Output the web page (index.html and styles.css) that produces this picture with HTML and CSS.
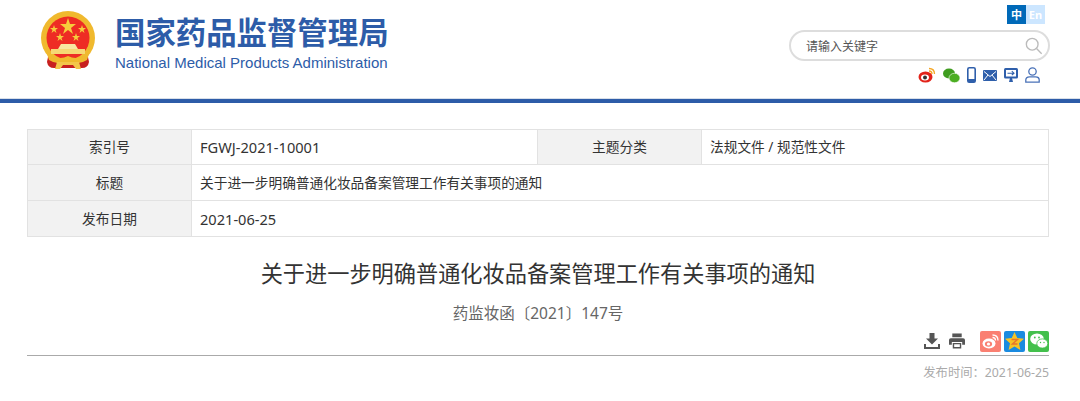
FILE: index.html
```html
<!DOCTYPE html>
<html lang="zh-CN">
<head>
    <meta charset="UTF-8">
    <meta name="viewport" content="width=device-width, initial-scale=1.0">
    <title>关于进一步明确普通化妆品备案管理工作有关事项的通知</title>
    <link rel="stylesheet" href="styles.css">
</head>
<body>
    <header class="cabecera">
        <div class="marca">
            <svg class="emblema" width="56" height="60" viewBox="0 0 56 60">
                <path d="M9 42 L7 52 Q8 58 14 58 L42 58 Q48 58 49 52 L47 42 Z" fill="#c8201f"/>
                <circle cx="28" cy="28" r="27" fill="#f0b92e"/>
                <circle cx="28" cy="28" r="21.500" fill="#ee2c24"/>
                <polygon points="28,8 30,14 36,14 31,18 33,24 28,20 23,24 25,18 20,14 26,14" fill="#f6cd3c"/>
                <polygon points="14,15 15,18 18,18 15.500,20 16.500,23 14,21 11.500,23 12.500,20 10,18 13,18" fill="#f6cd3c"/>
                <polygon points="42,15 43,18 46,18 43.500,20 44.500,23 42,21 39.500,23 40.500,20 38,18 41,18" fill="#f6cd3c"/>
                <polygon points="20,23 21,26 24,26 21.500,28 22.500,31 20,29 17.500,31 18.500,28 16,26 19,26" fill="#f6cd3c"/>
                <polygon points="36,23 37,26 40,26 37.500,28 38.500,31 36,29 33.500,31 34.500,28 32,26 35,26" fill="#f6cd3c"/>
                <path d="M18 39 L21 34 L35 34 L38 39 Z" fill="#f8e7a0"/>
                <rect x="11" y="39" width="34" height="5" fill="#f6d874"/>
                <path d="M6 41 Q17 52 28 46 Q39 52 50 41 L47 50 Q38 56 28 51 Q18 56 9 50 Z" fill="#f0b92e"/>
                <path d="M17 52 L39 52 L41 59 L36 59 L33 55 L23 55 L20 59 L15 59 Z" fill="#f3c64a"/>
            </svg>
            <div class="marca-texto">
                <div class="marca-nombre">国家药品监督管理局</div>
                <div class="marca-ingles">National Medical Products Administration</div>
            </div>
        </div>
        <div class="herramientas">
            <div class="idiomas">
                <span class="idioma activo">中</span>
                <span class="idioma">En</span>
            </div>
            <div class="buscador">
                <span>请输入关键字</span>
                <svg width="18" height="18" viewBox="0 0 20 20" fill="none" stroke="#bbb" stroke-width="1.500">
                    <circle cx="8" cy="8" r="6.500"/>
                    <path d="M12.800 12.800 L18.500 18.500"/>
                </svg>
            </div>
            <div class="enlaces">
                <svg width="18" height="16" viewBox="0 0 18 16">
                    <ellipse cx="7.500" cy="10" rx="7" ry="5.500" fill="#e2231a"/>
                    <ellipse cx="7" cy="10.500" rx="4" ry="3" fill="#fff"/>
                    <circle cx="7" cy="10.500" r="2" fill="#333"/>
                    <path d="M11 1.500 Q16.500 1.500 16.500 7 M11 4 Q14 4 14 7" fill="none" stroke="#f5a623" stroke-width="1.300"/>
                </svg>
                <svg width="17" height="15" viewBox="0 0 17 15">
                    <ellipse cx="6" cy="5.500" rx="6" ry="5" fill="#3f9d1f"/>
                    <ellipse cx="11.500" cy="10" rx="5.500" ry="4.700" fill="#4cae22" stroke="#fff" stroke-width=".6"/>
                </svg>
                <svg width="9" height="16" viewBox="0 0 9 16">
                    <rect x=".8" y=".8" width="7.400" height="14.400" rx="1.500" fill="#fff" stroke="#2f5fab" stroke-width="1.600"/>
                    <rect x=".8" y="12" width="7.400" height="3.200" fill="#2f5fab"/>
                </svg>
                <svg width="14" height="11" viewBox="0 0 14 11">
                    <rect width="14" height="11" rx="1" fill="#2f5fab"/>
                    <path d="M1 1.500 L7 6.500 L13 1.500 M1 10 L5 5 M13 10 L9 5" fill="none" stroke="#fff"/>
                </svg>
                <svg width="14" height="14" viewBox="0 0 14 14">
                    <rect width="14" height="10.500" rx="1.500" fill="#2f5fab"/>
                    <rect x="2" y="2" width="10" height="6.500" fill="#fff"/>
                    <path d="M3.500 5.200 H10 M7.800 3.200 L10 5.200 L7.800 7.200" fill="none" stroke="#2f5fab" stroke-width="1.100"/>
                    <path d="M5 14 L6 10 L8 10 L9 14 Z" fill="#2f5fab"/>
                </svg>
                <svg width="15" height="16" viewBox="0 0 15 16" fill="none" stroke="#4a72b8" stroke-width="1.300">
                    <circle cx="7.500" cy="4.500" r="3.700"/>
                    <path d="M.8 15.200 V13 Q.8 9.800 4.500 9.800 H10.500 Q14.200 9.800 14.200 13 V15.200 Z"/>
                </svg>
            </div>
        </div>
    </header>
    <div class="franja"></div>

    <main class="contenido">
        <table class="ficha">
            <tr>
                <th>索引号</th>
                <td class="col-valor latino">FGWJ-2021-10001</td>
                <th>主题分类</th>
                <td>法规文件 / 规范性文件</td>
            </tr>
            <tr>
                <th>标题</th>
                <td colspan="3">关于进一步明确普通化妆品备案管理工作有关事项的通知</td>
            </tr>
            <tr>
                <th>发布日期</th>
                <td colspan="3" class="latino">2021-06-25</td>
            </tr>
        </table>

        <h1 class="titulo">关于进一步明确普通化妆品备案管理工作有关事项的通知</h1>
        <p class="referencia">药监妆函〔2021〕147号</p>

        <div class="acciones">
            <svg width="16" height="16" viewBox="0 0 16 16" fill="#555">
                <path d="M5.500 0 H10.500 V5.500 H14 L8 11.500 L2 5.500 H5.500 Z"/>
                <path d="M0 11 H2 V14 H14 V11 H16 V16 H0 Z"/>
            </svg>
            <svg class="impresora" width="16" height="16" viewBox="0 0 17 16" fill="#555">
                <path d="M3.500 0 H13.500 V4 H3.500 Z"/>
                <path d="M2 5 H15 Q17 5 17 7 V12 H14 V9 H3 V12 H0 V7 Q0 5 2 5 Z"/>
                <path d="M4 10 H13 V16 H4 Z M5.500 11.500 V14.500 H11.500 V11.500 Z"/>
            </svg>
            <span class="compartir rojo">
                <svg width="17" height="15" viewBox="0 0 17 15">
                    <ellipse cx="7" cy="9.500" rx="6.500" ry="5" fill="#fff"/>
                    <ellipse cx="6.500" cy="10" rx="3.600" ry="2.800" fill="#fa8072"/>
                    <circle cx="6.500" cy="10" r="1.600" fill="#fff"/>
                    <path d="M10.500 1 Q16 1 16 6.500 M10.500 3.500 Q13.500 3.500 13.500 6.500" fill="none" stroke="#fff" stroke-width="1.300"/>
                </svg>
            </span>
            <span class="compartir azul">
                <svg width="19" height="18" viewBox="0 0 19 18">
                    <polygon points="9.500,0 12.300,6 19,6.800 14,11.300 15.400,18 9.500,14.600 3.600,18 5,11.300 0,6.800 6.700,6" fill="#f7c325"/>
                    <path d="M6.500 7.500 H12.500 L7.500 12 H12.500" fill="none" stroke="#e8762b" stroke-width="1.500"/>
                </svg>
            </span>
            <span class="compartir verde">
                <svg width="18" height="16" viewBox="0 0 18 16">
                    <ellipse cx="7" cy="6" rx="6.800" ry="5.600" fill="#fff"/>
                    <ellipse cx="12.300" cy="10.500" rx="5.500" ry="4.600" fill="#fff" stroke="#43c04c" stroke-width=".8"/>
                    <circle cx="4.800" cy="4.500" r=".9" fill="#43c04c"/>
                    <circle cx="9" cy="4.500" r=".9" fill="#43c04c"/>
                    <circle cx="10.500" cy="9.500" r=".7" fill="#43c04c"/>
                    <circle cx="14" cy="9.500" r=".7" fill="#43c04c"/>
                </svg>
            </span>
        </div>
        <div class="fecha">发布时间：2021-06-25</div>
    </main>
</body>
</html>
```
FILE: styles.css
```css
body {
    margin: 0;
    background-color: #fff;
    font-family: "Noto Sans", "Noto Sans CJK SC", sans-serif;
    color: #333;
}

.cabecera {
    height: 98px;
    box-sizing: border-box;
    padding: 0 30px 0 40px;
    display: flex;
    justify-content: space-between;
}

.marca {
    display: flex;
    padding-top: 10px;
}

.emblema {
    flex: none;
}

.marca-texto {
    margin-left: 19px;
    color: #2d5ca8;
}

.marca-nombre {
    font-family: "Liberation Sans", "Noto Sans CJK SC", sans-serif;
    font-size: 30.400px;
    line-height: 34px;
    margin-top: 6px;
    font-weight: bold;
    white-space: nowrap;
}

.marca-ingles {
    font-family: "Liberation Sans", sans-serif;
    font-size: 15px;
    line-height: 18px;
    margin-top: 4px;
    white-space: nowrap;
}

.herramientas {
    width: 261px;
    padding-top: 5px;
}

.idiomas {
    display: flex;
    justify-content: flex-end;
    margin-right: 5px;
}

.idioma {
    width: 19px;
    height: 19px;
    line-height: 19px;
    text-align: center;
    font-size: 11px;
    font-weight: bold;
    color: #fff;
    background-color: #cce6ff;
}

.idioma.activo {
    background-color: #0069b8;
}

.buscador {
    height: 27px;
    margin-top: 6px;
    border: 2px solid #ddd;
    border-radius: 16px;
    padding: 0 5px 0 15px;
    display: flex;
    align-items: center;
    justify-content: space-between;
    font-size: 12px;
    color: #555;
}

.enlaces {
    display: flex;
    justify-content: flex-end;
    align-items: center;
    gap: 7px;
    margin: 5px 10px 0 0;
    height: 18px;
}

.franja {
    height: 4px;
    background-color: #2d5ca8;
    border-top: 1px solid #d8dfe9;
}

.contenido {
    padding: 26px 31px 0 27px;
}

.ficha {
    width: 1022px;
    border-collapse: collapse;
    table-layout: fixed;
    font-size: 13.700px;
}

.ficha th,
.ficha td {
    height: 35px;
    padding: 0;
    border: 1px solid #e2e2e2;
    line-height: 20px;
}

.ficha tr:first-child th,
.ficha tr:first-child td {
    height: 34px;
}

.ficha th {
    width: 163px;
    font-weight: normal;
    background-color: #f2f2f2;
}

.ficha td {
    padding-left: 8px;
}

.ficha .latino {
    font-size: 14.600px;
}

.ficha .col-valor {
    width: 337px;
}

.titulo {
    margin: 22px 0 0;
    font-size: 22.200px;
    line-height: 30px;
    font-weight: normal;
    text-align: center;
}

.referencia {
    margin: 12px 0 0;
    font-size: 15.500px;
    line-height: 24px;
    text-align: center;
    color: #666;
}

.acciones {
    display: flex;
    justify-content: flex-end;
    align-items: center;
    height: 22px;
    margin-top: 5px;
    padding-bottom: 3px;
    border-bottom: 1px solid #aaa;
}

.impresora {
    margin: 0 12px 0 9px;
}

.compartir {
    width: 21px;
    height: 21px;
    margin-left: 3px;
    border-radius: 2px;
    display: flex;
    align-items: center;
    justify-content: center;
}

.rojo {
    background-color: #fa8072;
}

.azul {
    background-color: #1a8be0;
}

.verde {
    background-color: #43c04c;
}

.fecha {
    margin-top: 9px;
    text-align: right;
    font-size: 12.300px;
    line-height: 16px;
    color: #aaa;
}
```
